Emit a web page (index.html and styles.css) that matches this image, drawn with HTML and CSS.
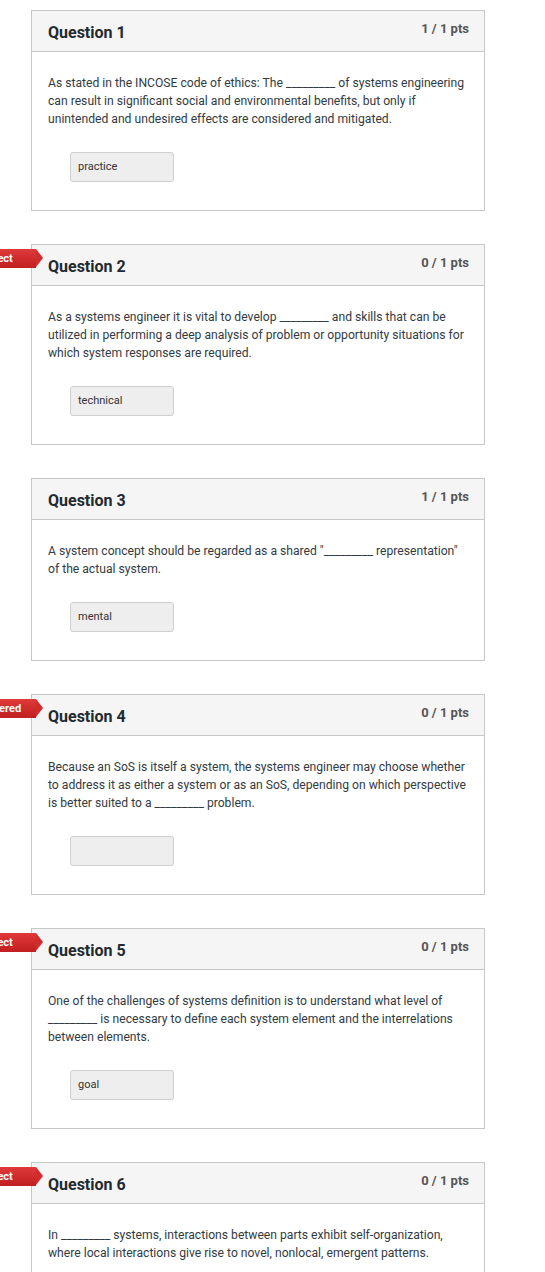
FILE: index.html
```html
<!DOCTYPE html>
<html>
<head>
<meta charset="utf-8">
<link rel="stylesheet" href="styles.css">
</head>
<body>
<div class="quiz">
  <div class="question">
    <div class="q-header">
      <h2 class="q-title">Question 1</h2>
      <span class="q-pts">1 / 1 pts</span>
    </div>
    <div class="q-body">
      <p class="q-text">As stated in the INCOSE code of ethics: The _________ of systems engineering can result in significant social and environmental benefits, but only if unintended and undesired effects are considered and mitigated.</p>
      <div class="answer">practice</div>
    </div>
  </div>

  <div class="question">
    <div class="ribbon">Incorrect</div>
    <div class="q-header">
      <h2 class="q-title">Question 2</h2>
      <span class="q-pts">0 / 1 pts</span>
    </div>
    <div class="q-body">
      <p class="q-text">As a systems engineer it is vital to develop _________ and skills that can be utilized in performing a deep analysis of problem or opportunity situations for which system responses are required.</p>
      <div class="answer">technical</div>
    </div>
  </div>

  <div class="question">
    <div class="q-header">
      <h2 class="q-title">Question 3</h2>
      <span class="q-pts">1 / 1 pts</span>
    </div>
    <div class="q-body">
      <p class="q-text">A system concept should be regarded as a shared "_________ representation" of the actual system.</p>
      <div class="answer">mental</div>
    </div>
  </div>

  <div class="question">
    <div class="ribbon">Unanswered</div>
    <div class="q-header">
      <h2 class="q-title">Question 4</h2>
      <span class="q-pts">0 / 1 pts</span>
    </div>
    <div class="q-body">
      <p class="q-text">Because an SoS is itself a system, the systems engineer may choose whether to address it as either a system or as an SoS, depending on which perspective is better suited to a _________ problem.</p>
      <div class="answer"></div>
    </div>
  </div>

  <div class="question">
    <div class="ribbon">Incorrect</div>
    <div class="q-header">
      <h2 class="q-title">Question 5</h2>
      <span class="q-pts">0 / 1 pts</span>
    </div>
    <div class="q-body">
      <p class="q-text">One of the challenges of systems definition is to understand what level of _________ is necessary to define each system element and the interrelations between elements.</p>
      <div class="answer">goal</div>
    </div>
  </div>

  <div class="question">
    <div class="ribbon">Incorrect</div>
    <div class="q-header">
      <h2 class="q-title">Question 6</h2>
      <span class="q-pts">0 / 1 pts</span>
    </div>
    <div class="q-body">
      <p class="q-text">In _________ systems, interactions between parts exhibit self-organization, where local interactions give rise to novel, nonlocal, emergent patterns.</p>
      <div class="answer"></div>
    </div>
  </div>
</div>
</body>
</html>
```

FILE: styles.css
```css
html, body {
  margin: 0;
  padding: 0;
  background: #fff;
}
body {
  font-family: Roboto, "Liberation Sans", Arial, sans-serif;
  color: #2d3b45;
  overflow: hidden;
}
.quiz {
  padding: 10px 0 0 31px;
  width: 454px;
}
.question {
  position: relative;
  border: 1px solid #c7c7c7;
  margin-bottom: 33px;
  background: #fff;
}
.q-header {
  display: flex;
  justify-content: space-between;
  align-items: flex-start;
  background: #f5f5f5;
  border-bottom: 1px solid #c7c7c7;
  height: 40px;
  padding: 0 15px 0 16px;
}
.q-title {
  margin: 0;
  padding-top: 12px;
  font-size: 16px;
  line-height: 20px;
  font-weight: 700;
  color: #222a30;
}
.q-pts {
  padding-top: 9px;
  font-size: 13px;
  line-height: 18px;
  font-weight: 700;
  color: #555;
}
.q-body {
  padding: 22px 16px 28px 16px;
}
.q-text {
  margin: 0;
  font-size: 12.15px;
  line-height: 18px;
  color: #333b42;
}
.answer {
  margin: 24px 0 0 22px;
  height: 28px;
  border: 1px solid #cfcfcf;
  border-radius: 3px;
  background: #eeeeee;
  font-size: 11px;
  line-height: 28px;
  padding-left: 7px;
  box-sizing: content-box;
  width: 95px;
  color: #333;
}
.ribbon {
  position: absolute;
  top: 4px;
  left: -87px;
  width: 91px;
  height: 19px;
  line-height: 19px;
  background: linear-gradient(#e0393b, #c0201f);
  color: #fff;
  font-size: 11px;
  font-weight: 700;
  text-align: center;
}
.ribbon::after {
  content: "";
  position: absolute;
  left: 100%;
  top: 0;
  border-left: 7px solid #d02c2c;
  border-top: 9.5px solid transparent;
  border-bottom: 9.5px solid transparent;
}
```
